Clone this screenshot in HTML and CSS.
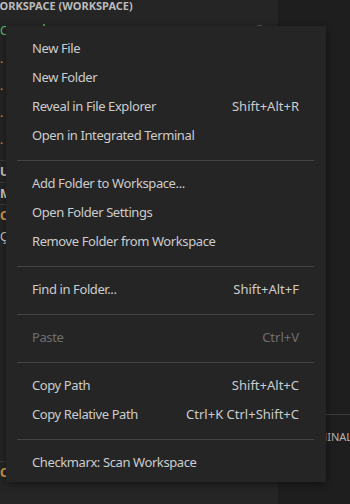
FILE: index.html
```html
<!DOCTYPE html>
<html lang="en">
<head>
    <meta charset="UTF-8">
    <title>Explorer - context menu</title>
    <link rel="stylesheet" href="styles.css">
</head>
<body>
    <div class="workbench">
        <aside class="sidebar">
            <div class="sidebar-title">WORKSPACE (WORKSPACE)</div>
            <div class="tree">
                <div class="tree-row first">
                    <span class="ch green">C</span>
                    <span class="mark-dot"></span>
                    <span class="mark-dash"></span>
                </div>
                <div class="tree-row"><span class="ch orange">.</span></div>
                <div class="tree-row"><span class="ch orange">.</span></div>
                <div class="tree-row"><span class="ch orange">.</span></div>
                <div class="tree-row"><span class="ch orange">.</span></div>
            </div>
            <div class="section">UT</div>
            <div class="section">M</div>
            <div class="section"><span class="orange">C</span> <span class="blue">I</span></div>
            <div class="section plain">Ç</div>
            <div class="sidebar-fill"></div>
            <div class="section bottom"><span class="orange">C</span><span class="blue">:</span></div>
        </aside>
        <main class="editor">
            <div class="editor-area"></div>
            <div class="panel">
                <div class="panel-tabs">
                    <span class="panel-tab">PROBLEMS</span>
                    <span class="panel-tab">TERMINAL</span>
                </div>
            </div>
        </main>
    </div>

    <div class="context-menu">
        <ul class="menu-group">
            <li class="menu-item"><span class="label">New File</span></li>
            <li class="menu-item"><span class="label">New Folder</span></li>
            <li class="menu-item"><span class="label">Reveal in File Explorer</span><span class="keys">Shift+Alt+R</span></li>
            <li class="menu-item"><span class="label">Open in Integrated Terminal</span></li>
        </ul>
        <div class="separator"></div>
        <ul class="menu-group">
            <li class="menu-item"><span class="label">Add Folder to Workspace...</span></li>
            <li class="menu-item"><span class="label">Open Folder Settings</span></li>
            <li class="menu-item"><span class="label">Remove Folder from Workspace</span></li>
        </ul>
        <div class="separator"></div>
        <ul class="menu-group">
            <li class="menu-item"><span class="label">Find in Folder...</span><span class="keys">Shift+Alt+F</span></li>
        </ul>
        <div class="separator"></div>
        <ul class="menu-group">
            <li class="menu-item disabled"><span class="label">Paste</span><span class="keys">Ctrl+V</span></li>
        </ul>
        <div class="separator"></div>
        <ul class="menu-group">
            <li class="menu-item"><span class="label">Copy Path</span><span class="keys">Shift+Alt+C</span></li>
            <li class="menu-item"><span class="label">Copy Relative Path</span><span class="keys">Ctrl+K Ctrl+Shift+C</span></li>
        </ul>
        <div class="separator"></div>
        <ul class="menu-group">
            <li class="menu-item"><span class="label">Checkmarx: Scan Workspace</span></li>
        </ul>
    </div>
</body>
</html>
```

FILE: styles.css
```css
:root {
    --sidebar-bg: #252526;
    --editor-bg: #1e1e1e;
    --menu-bg: #252526;
    --menu-fg: #cccccc;
    --menu-disabled: #6e6e6e;
    --separator: #454545;
    --border: #3c3c3c;
}
* { box-sizing: border-box; margin: 0; padding: 0; }
html, body { width: 350px; height: 504px; overflow: hidden; }
body {
    background-color: var(--editor-bg);
    font-family: "Noto Sans", "Open Sans", sans-serif;
    color: var(--menu-fg);
    position: relative;
}
.workbench {
    display: grid;
    grid-template-columns: 278px 1fr;
    height: 504px;
}

/* sidebar (mostly hidden behind the menu) */
.sidebar {
    background-color: var(--sidebar-bg);
    display: flex;
    flex-direction: column;
    overflow: hidden;
    font-size: 11px;
}
.sidebar-title {
    height: 13px;
    line-height: 12px;
    font-weight: 700;
    color: #bbbbbb;
    white-space: nowrap;
    margin-left: -11px;
}
.tree { display: flex; flex-direction: column; padding-bottom: 7px; }
.tree-row {
    height: 27px;
    display: flex;
    align-items: center;
    font-size: 12px;
    white-space: nowrap;
}
.tree-row.first { height: 28px; margin-top: 4px; }
.tree-row .ch { width: 6px; line-height: 1; }
.mark-dot {
    width: 2px; height: 2px;
    background: #3fa34d;
    margin-left: 37px;
    align-self: flex-start;
    margin-top: 7px;
}
.mark-dash {
    width: 5px; height: 2px;
    background: #3e5a55;
    margin-left: 212px;
    align-self: flex-start;
    margin-top: 8px;
}
.green { color: #4ec36b; }
.orange { color: #d69a42; }
.blue { color: #5a9ee6; }
.section {
    height: 22px;
    line-height: 21px;
    border-top: 1px solid #3a3a3a;
    font-size: 12px;
    font-weight: 700;
    color: #cccccc;
    white-space: nowrap;
}
.section.plain { border-top: none; font-weight: 400; }
.sidebar-fill { flex: 1; }
.section.bottom { height: 43px; }

/* editor + panel */
.editor {
    display: flex;
    flex-direction: column;
    background-color: var(--editor-bg);
}
.editor-area { flex: 1; }
.panel {
    height: 90px;
    border-top: 1px solid var(--border);
}
.panel-tabs {
    display: flex;
    gap: 18px;
    padding-top: 15px;
    margin-left: -55px;
    white-space: nowrap;
}
.panel-tab {
    font-size: 11px;
    line-height: 14px;
    color: #b5b5b5;
}

/* context menu */
.context-menu {
    position: absolute;
    top: 26px;
    left: 6px;
    width: 320px;
    height: 456px;
    background-color: var(--menu-bg);
    box-shadow: 0 2px 8px rgba(0, 0, 0, 0.45);
    padding: 7px 0 6px;
    font-size: 13px;
}
.menu-group { list-style: none; }
.menu-item {
    height: 29px;
    display: flex;
    align-items: center;
    justify-content: space-between;
    padding: 0 27px 0 26px;
    white-space: nowrap;
}
.menu-item .label { letter-spacing: -0.4px; }
.menu-item .keys { color: var(--menu-fg); }
.menu-item.disabled, .menu-item.disabled .keys { color: var(--menu-disabled); }
.separator {
    height: 1px;
    margin: 11px 12px 7px 11px;
    background-color: var(--separator);
}
```
